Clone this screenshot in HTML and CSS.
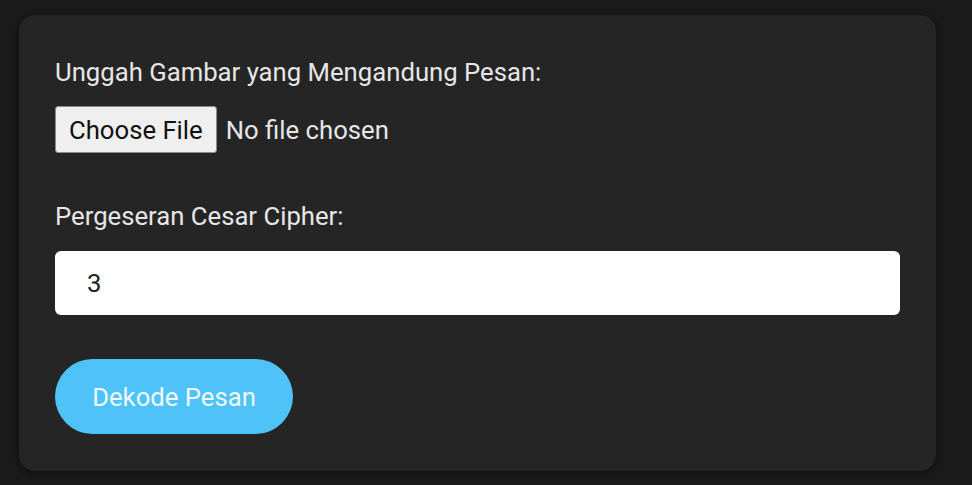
FILE: index.html
```html
<!DOCTYPE html>
<html lang="id">
<head>
<meta charset="utf-8">
<title>Dekode Pesan</title>
<link rel="stylesheet" href="styles.css">
</head>
<body>
<form class="card">
  <label class="label" for="img">Unggah Gambar yang Mengandung Pesan:</label>
  <div class="file-row">
    <span class="file-btn">Choose File</span>
    <span class="file-text">No file chosen</span>
  </div>
  <label class="label label-gap" for="shift">Pergeseran Cesar Cipher:</label>
  <input class="text-input" id="shift" type="number" value="3">
  <button class="btn" type="button">Dekode Pesan</button>
</form>
</body>
</html>
```
FILE: styles.css
```css
html, body {
  margin: 0;
  background: #1b1b1b;
}
body {
  padding: 15px 36px 15px 19px;
  font-family: Roboto, "Noto Sans", sans-serif;
  color: #e6e6e6;
}
.card {
  background: #252525;
  border-radius: 16px;
  box-shadow: 0 2px 12px rgba(0,0,0,0.5);
  padding: 36px 36px 37px;
  display: flex;
  flex-direction: column;
  align-items: flex-start;
}
.label {
  font-size: 25.7px;
  line-height: 42px;
  color: #e6e6e6;
}
.file-row {
  display: flex;
  align-items: center;
  margin-top: 13px;
  gap: 9px;
}
.file-btn {
  background: #efefef;
  color: #111;
  border: 1px solid #8a8a8a;
  border-radius: 3px;
  font-size: 25.7px;
  height: 47px;
  box-sizing: border-box;
  padding: 0 13px;
  display: flex;
  align-items: center;
}
.file-text {
  font-size: 25.7px;
}
.label-gap {
  margin-top: 42px;
}
.text-input {
  margin-top: 14px;
  align-self: stretch;
  height: 64px;
  box-sizing: border-box;
  border: none;
  border-radius: 6px;
  background: #fff;
  padding: 0 32px;
  font-family: Roboto, sans-serif;
  font-size: 25.7px;
  color: #222;
  -moz-appearance: textfield;
}
.text-input::-webkit-inner-spin-button,
.text-input::-webkit-outer-spin-button {
  -webkit-appearance: none;
  margin: 0;
}
.btn {
  margin-top: 44px;
  width: 238px;
  height: 75px;
  border: none;
  border-radius: 38px;
  background: #4fc3f7;
  color: #eef9ff;
  font-family: Roboto, sans-serif;
  font-size: 25.7px;
  padding: 0;
}
```
